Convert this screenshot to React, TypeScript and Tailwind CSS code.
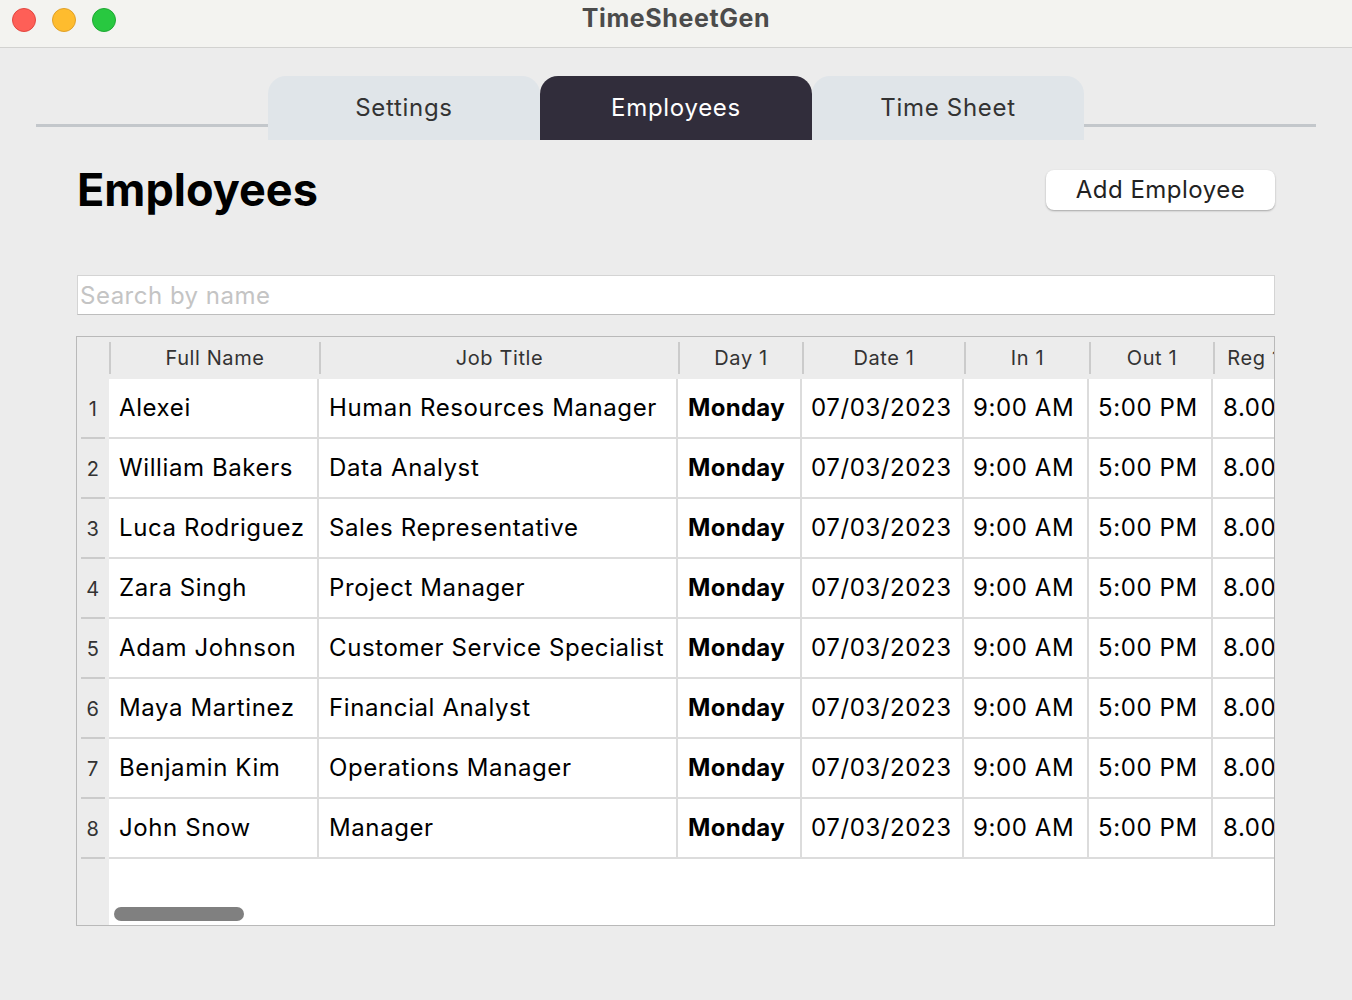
import React from 'react';

const employees = [
    { name: 'Alexei', title: 'Human Resources Manager' },
    { name: 'William Bakers', title: 'Data Analyst' },
    { name: 'Luca Rodriguez', title: 'Sales Representative' },
    { name: 'Zara Singh', title: 'Project Manager' },
    { name: 'Adam Johnson', title: 'Customer Service Specialist' },
    { name: 'Maya Martinez', title: 'Financial Analyst' },
    { name: 'Benjamin Kim', title: 'Operations Manager' },
    { name: 'John Snow', title: 'Manager' },
];

const font = { fontFamily: 'Inter, "Noto Sans", sans-serif' };

function HeaderCell({ label, w }: { label: string; w: string }) {
    return (
        <div className={`${w} flex items-center shrink-0`}>
            <div className="w-[2px] h-8 bg-[#cbcbcb] shrink-0" />
            <div className="flex-1 text-center text-[20px] tracking-[0.6px] text-[#333] whitespace-nowrap overflow-hidden">{label}</div>
        </div>
    );
}

export default function App() {
    const tabs = ['Settings', 'Employees', 'Time Sheet'];
    const active = 'Employees';

    return (
        <div className="w-[1352px] h-[1000px] bg-[#ececec] flex flex-col overflow-hidden tracking-[0.5px]" style={font}>
            {/* Title bar */}
            <div className="h-12 bg-[#f3f3f0] border-b border-[#d2d2d0] flex items-center relative shrink-0">
                <div className="flex gap-4 pl-3 -mt-[8px]">
                    <div className="w-6 h-6 rounded-full bg-[#fe5f57] border border-[#e2463f]" />
                    <div className="w-6 h-6 rounded-full bg-[#febc2e] border border-[#e0a028]" />
                    <div className="w-6 h-6 rounded-full bg-[#28c840] border border-[#1ea833]" />
                </div>
                <div className="absolute inset-0 flex items-center justify-center pointer-events-none">
                    <span className="text-[25px] font-bold text-[#4b4b4b] -mt-[9px] tracking-[0.6px]">TimeSheetGen</span>
                </div>
            </div>

            {/* Tabs */}
            <div className="mt-[28px] px-9 flex items-end h-16 shrink-0">
                <div className="flex-1 h-[3px] bg-[#c3c7cb] mb-[13px]" />
                {tabs.map((t) => (
                    <div
                        key={t}
                        className={`w-[272px] h-16 rounded-t-[18px] flex items-center justify-center text-[24px] tracking-[0.7px] ${
                            t === active ? 'bg-[#312d3b] text-white' : 'bg-[#e0e5e9] text-[#333]'
                        }`}
                    >
                        <span className="-mt-[1px]">{t}</span>
                    </div>
                ))}
                <div className="flex-1 h-[3px] bg-[#c3c7cb] mb-[13px]" />
            </div>

            <div className="px-[77px] flex flex-col">
                {/* Heading */}
                <div className="mt-[26px] h-12 flex items-center justify-between">
                    <h1 className="text-[45px] font-bold text-black tracking-[0px]">Employees</h1>
                    <button className="w-[229px] h-10 bg-white rounded-[8px] shadow-[0_1px_2px_rgba(0,0,0,0.3)] text-[24px] text-[#222] tracking-[0.5px]">
                        Add Employee
                    </button>
                </div>

                {/* Search */}
                <input
                    className="mt-[61px] h-10 w-full bg-white border border-[#d4d4d4] border-b-[#bdbdbd] px-[2px] text-[24px] tracking-[0.5px] outline-none placeholder:text-[#c4c4c4]"
                    placeholder="Search by name"
                />

                {/* Table */}
                <div className="mt-[21px] -ml-px h-[590px] border border-[#b9b9b9] bg-white flex relative overflow-hidden">
                    {/* Row numbers */}
                    <div className="w-8 bg-[#ececec] shrink-0 flex flex-col">
                        <div className="h-[42px]" />
                        {employees.map((_, i) => (
                            <div key={i} className="h-[60px] flex flex-col items-center">
                                {i > 0 && <div className="w-6 h-[2px] bg-[#cbcbcb] -mt-[2px]" />}
                                <div className="flex-1 flex items-center text-[20px] text-[#333]">{i + 1}</div>
                            </div>
                        ))}
                        <div className="w-6 h-[2px] bg-[#cbcbcb] -mt-[2px] ml-[4px]" />
                    </div>

                    <div className="flex-1 flex flex-col min-w-0">
                        {/* Header */}
                        <div className="h-[42px] bg-[#ececec] flex shrink-0">
                            <HeaderCell label="Full Name" w="w-[210px]" />
                            <HeaderCell label="Job Title" w="w-[359px]" />
                            <HeaderCell label="Day 1" w="w-[124px]" />
                            <HeaderCell label="Date 1" w="w-[162px]" />
                            <HeaderCell label="In 1" w="w-[125px]" />
                            <HeaderCell label="Out 1" w="w-[124px]" />
                            <HeaderCell label="Reg 1" w="w-[80px]" />
                        </div>

                        {/* Rows */}
                        {employees.map((e) => (
                            <div key={e.name} className="h-[60px] flex border-b-2 border-[#dcdcdc] text-[24px] tracking-[0.6px] text-black shrink-0 whitespace-nowrap">
                                <div className="w-[210px] pl-[10px] border-r-2 border-[#dcdcdc] flex items-center shrink-0 overflow-hidden">{e.name}</div>
                                <div className="w-[359px] pl-[10px] border-r-2 border-[#dcdcdc] flex items-center shrink-0 overflow-hidden">{e.title}</div>
                                <div className="w-[124px] pl-[10px] border-r-2 border-[#dcdcdc] flex items-center shrink-0 font-bold tracking-[0.3px]">Monday</div>
                                <div className="w-[162px] pl-[9px] border-r-2 border-[#dcdcdc] flex items-center shrink-0">07/03/2023</div>
                                <div className="w-[125px] pl-[9px] border-r-2 border-[#dcdcdc] flex items-center shrink-0">9:00 AM</div>
                                <div className="w-[124px] pl-[9px] border-r-2 border-[#dcdcdc] flex items-center shrink-0">5:00 PM</div>
                                <div className="w-[120px] pl-[10px] flex items-center shrink-0">8.00</div>
                            </div>
                        ))}
                    </div>

                    {/* Scrollbar thumb */}
                    <div className="absolute left-[37px] bottom-[4px] w-[130px] h-[14px] rounded-full bg-[#808080]" />
                </div>
            </div>
        </div>
    );
}
